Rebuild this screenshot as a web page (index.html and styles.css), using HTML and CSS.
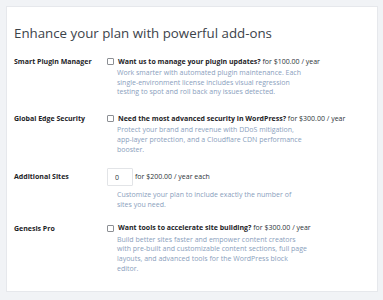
FILE: index.html
```html
<!DOCTYPE html>
<html lang="en">

<head>
    <meta charset="UTF-8">
    <meta name="viewport" content="width=device-width, initial-scale=1.0">
    <title>Add-ons</title>
    <link rel="stylesheet" href="styles.css">
</head>

<body>
    <div class="card">
        <h2>Enhance your plan with powerful add-ons</h2>

        <div class="addon">
            <div class="addon-label">Smart Plugin Manager</div>
            <div class="addon-body">
                <label class="addon-title">
                    <span class="check"></span>
                    <span><strong>Want us to manage your plugin updates?</strong> for $100.00 / year</span>
                </label>
                <p class="desc">Work smarter with automated plugin maintenance. Each single-environment license includes visual regression testing to spot and roll back any issues detected.</p>
            </div>
        </div>

        <div class="addon">
            <div class="addon-label">Global Edge Security</div>
            <div class="addon-body">
                <label class="addon-title">
                    <span class="check"></span>
                    <span><strong>Need the most advanced security in WordPress?</strong> for $300.00 / year</span>
                </label>
                <p class="desc">Protect your brand and revenue with DDoS mitigation, app-layer protection, and a Cloudflare CDN performance booster.</p>
            </div>
        </div>

        <div class="addon addon-sites">
            <div class="addon-label">Additional Sites</div>
            <div class="addon-body">
                <div class="addon-title">
                    <input class="qty" type="text" value="0">
                    <span>for $200.00 / year each</span>
                </div>
                <p class="desc">Customize your plan to include exactly the number of sites you need.</p>
            </div>
        </div>

        <div class="addon">
            <div class="addon-label">Genesis Pro</div>
            <div class="addon-body">
                <label class="addon-title">
                    <span class="check"></span>
                    <span><strong>Want tools to accelerate site building?</strong> for $300.00 / year</span>
                </label>
                <p class="desc">Build better sites faster and empower content creators with pre-built and customizable content sections, full page layouts, and advanced tools for the WordPress block editor.</p>
            </div>
        </div>
    </div>
</body>

</html>
```

FILE: styles.css
```css
body {
    font-family: 'Open Sans', sans-serif;
    background-color: #f1f3f6;
    color: #2c3338;
    margin: 0;
    padding: 6px 5px 8px 6px;
}

.card {
    background-color: #fff;
    border: 1px solid #e6e8ec;
    padding: 14px 8px 14px 7px;
    height: 286px;
    box-sizing: border-box;
}

h2 {
    font-size: 13.3px;
    font-weight: 400;
    color: #3c434a;
    margin: 2px 0 12px;
    line-height: 20px;
}

.addon {
    display: grid;
    grid-template-columns: 93px 1fr;
    font-size: 7px;
    line-height: 9.7px;
    margin-bottom: 15px;
}

.addon-label {
    font-weight: 700;
    color: #1d2327;
    padding-top: 2px;
}

.addon-title {
    display: flex;
    align-items: center;
    gap: 4px;
    min-height: 13px;
    color: #2c3338;
}

.addon-title strong {
    color: #1d2327;
}

.check {
    width: 5px;
    height: 5px;
    border: 1px solid #8c8f94;
    border-radius: 1px;
    flex-shrink: 0;
}

.desc {
    margin: 0;
    padding-left: 10px;
    color: #8aa0bd;
    max-width: 192px;
}

.addon-sites {
    margin-top: -1px;
    margin-bottom: 12px;
}

.addon-sites .addon-label {
    padding-top: 4px;
}

.addon-sites .addon-title {
    min-height: 18px;
    gap: 2px;
    margin-bottom: 4px;
}

.addon-sites .desc {
    max-width: 180px;
}

.qty {
    width: 26px;
    height: 18px;
    box-sizing: border-box;
    border: 1px solid #e2e4e7;
    border-radius: 1px;
    font-family: inherit;
    font-size: 7px;
    color: #2c3338;
    padding: 0 0 0 7px;
    margin: 0;
}
```
